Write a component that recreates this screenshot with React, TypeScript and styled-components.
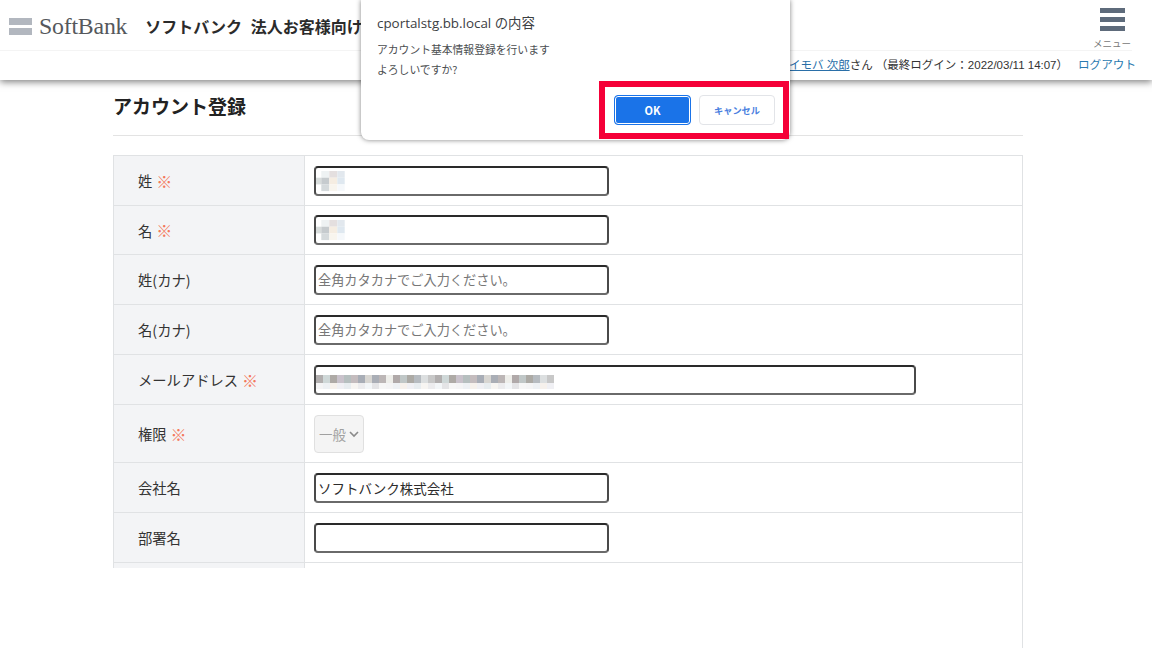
import React from 'react';
import styled, { createGlobalStyle } from 'styled-components';

const GlobalStyle = createGlobalStyle`
  html, body {
    margin: 0;
    padding: 0;
    background: #fff;
  }
  body {
    font-family: "Liberation Sans", "Noto Sans CJK JP", sans-serif;
    color: #333;
  }
`;

const Page = styled.div`
  position: relative;
  width: 1152px;
  height: 648px;
  overflow: hidden;
  background: #fff;
`;

// Header
const Header = styled.header`
  height: 80px;
  box-sizing: border-box;
  background: #fff;
  box-shadow: 0 2px 7px rgba(0, 0, 0, 0.5);
  display: flex;
  flex-direction: column;
`;

const TopRow = styled.div`
  height: 51px;
  box-sizing: border-box;
  border-bottom: 1px solid #f4f4f4;
  margin-right: 20px;
  padding: 2px 0 0 9px;
  display: flex;
  align-items: center;
`;

const LogoMark = styled.div`
  width: 23px;
  height: 17px;
  display: flex;
  flex-direction: column;
  justify-content: space-between;

  &::before, &::after {
    content: '';
    height: 7px;
    background: #b2b7bf;
  }
`;

const LogoText = styled.span`
  margin-left: 7px;
  font-family: "Liberation Serif", serif;
  font-size: 23.8px;
  letter-spacing: -0.2px;
  color: #55585c;
`;

const SiteTitle = styled.h1`
  margin: 0 0 0 18px;
  font-family: "Noto Sans CJK JP", sans-serif;
  font-size: 16px;
  font-weight: 700;
  word-spacing: 5px;
  color: #2b2b2b;
  white-space: nowrap;
`;

const MenuButton = styled.div`
  position: absolute;
  top: 8px;
  left: 1093px;
  width: 38px;
  display: flex;
  flex-direction: column;
  align-items: center;
`;

const MenuBar = styled.span`
  width: 25px;
  height: 5px;
  margin-bottom: 4px;
  background: #5e6b7b;
`;

const MenuLabel = styled.span`
  margin-top: 1px;
  font-family: "Noto Sans CJK JP", sans-serif;
  font-size: 9.5px;
  line-height: 14px;
  color: #777;
  white-space: nowrap;
`;

const UserRow = styled.div`
  height: 29px;
  box-sizing: border-box;
  padding: 0 16px 3px 0;
  display: flex;
  justify-content: flex-end;
  align-items: center;
  font-size: 11.5px;
  white-space: nowrap;
  color: #333;
`;

const UserLink = styled.a`
  color: #2a6fa8;
  text-decoration: underline;
`;

const LogoutLink = styled.a`
  margin-left: 10px;
  font-size: 11.6px;
  color: #2a7ab0;
`;

// Main form
const Main = styled.main`
  width: 910px;
  margin-left: 113px;
`;

const PageTitle = styled.h2`
  margin: 0 0 19px;
  height: 56px;
  box-sizing: border-box;
  padding-top: 12px;
  border-bottom: 1px solid #e3e3e3;
  font-family: "Noto Sans CJK JP", sans-serif;
  font-size: 19px;
  line-height: 27px;
  font-weight: 700;
  color: #222;
`;

const FormTable = styled.div`
  border-right: 1px solid #e0e2e4;
  height: 520px;
  box-sizing: border-box;
`;

// The row heights follow the reference, which was scaled down and lost a pixel at the second row
const Row = styled.div<{ $height?: number; $first?: boolean; $cut?: boolean }>`
  display: grid;
  grid-template-columns: 192px 1fr;
  height: ${(p) => p.$height ?? 50}px;
  box-sizing: border-box;
  border-top: ${(p) => (p.$first ? '1px solid #e0e2e4' : 'none')};
  border-bottom: ${(p) => (p.$cut ? 'none' : '1px solid #e0e2e4')};
`;

const Label = styled.div`
  background: #f3f4f6;
  border-left: 1px solid #e0e2e4;
  border-right: 1px solid #e0e2e4;
  padding-left: 24px;
  display: flex;
  align-items: center;
  gap: 4px;
  font-family: "Noto Sans CJK JP", sans-serif;
  font-size: 14.3px;
  color: #333;
`;

const Required = styled.span`
  color: #f4795c;
  font-size: 16px;
`;

const Cell = styled.div`
  padding-left: 9px;
  display: flex;
  align-items: center;
`;

const Field = styled.div<{ $wide?: boolean }>`
  position: relative;
  width: ${(p) => (p.$wide ? 602 : 295)}px;
  height: 30px;
  box-sizing: border-box;
  border: 2px solid #4a4a4a;
  border-top-color: #2a2a2a;
  border-bottom-color: #6a6a6a;
  border-radius: 4px;
  padding-left: 2px;
  display: flex;
  align-items: center;
  font-family: "Noto Sans CJK JP", sans-serif;
  font-size: 13.5px;
  color: #2c2c2c;
  background: #fff;
`;

const Placeholder = styled.span`
  font-size: 13.2px;
  color: #777;
`;

const FakeSelect = styled.div`
  width: 50px;
  height: 38px;
  box-sizing: border-box;
  border: 1px solid #e0e0e0;
  border-radius: 4px;
  background: #f4f4f4;
  padding-left: 4px;
  display: flex;
  align-items: center;
  gap: 3px;
  font-family: "Noto Sans CJK JP", sans-serif;
  font-size: 13.5px;
  color: #a0a0a0;
`;

const MosaicSvg = styled.svg`
  position: absolute;
  left: 0;
  top: 0;
`;

// Dialog
const Dialog = styled.div`
  position: absolute;
  top: 0;
  left: 361px;
  width: 429px;
  height: 140px;
  box-sizing: border-box;
  padding: 14px 16px 0;
  background: #fff;
  border-radius: 0 0 8px 8px;
  box-shadow: 0 0 5px rgba(0, 0, 0, 0.5);
`;

const DialogTitle = styled.div`
  font-family: "Open Sans", "Noto Sans CJK JP", sans-serif;
  font-size: 13.4px;
  line-height: 18px;
  color: #3c4043;
`;

const DialogMessage = styled.div`
  margin-top: 8px;
  font-family: "Noto Sans CJK JP", sans-serif;
  font-size: 10.8px;
  line-height: 19.5px;
  color: #4a4d50;
`;

const ButtonFrame = styled.div`
  position: absolute;
  left: 238px;
  top: 81px;
  width: 190px;
  height: 58px;
  box-sizing: border-box;
  border: 6px solid #f50038;
  padding-left: 9px;
  display: flex;
  align-items: center;
  gap: 8px;
`;

const DialogButton = styled.div<{ $primary?: boolean }>`
  width: ${(p) => (p.$primary ? 77 : 76)}px;
  height: 30px;
  box-sizing: border-box;
  border-radius: 4px;
  display: flex;
  align-items: center;
  justify-content: center;
  font-family: "Noto Sans CJK JP", sans-serif;
  font-size: ${(p) => (p.$primary ? 11 : 9.2)}px;
  font-weight: 700;
  color: ${(p) => (p.$primary ? '#fff' : '#4a7fe0')};
  background: ${(p) => (p.$primary ? '#1a73e8' : '#fff')};
  border: 1px solid ${(p) => (p.$primary ? '#1a73e8' : '#e2e4e8')};
  box-shadow: ${(p) => (p.$primary ? 'inset 0 0 0 1px #fff' : 'none')};
`;

// Blurred-out values, one cell per [x, y, width, colour]
const nameBlocks: [number, number, number, string][] = [
  [5.3, 3, 8, '#eef2f3'], [13.3, 3, 8, '#e4dfdf'], [21.3, 3, 7.4, '#e2e8ee'],
  [0, 9.7, 5.3, '#d8dddc'], [5.3, 9.7, 8, '#c6cbce'], [13.3, 9.7, 8, '#f5ede2'], [21.3, 9.7, 7.4, '#dfe8f0'],
  [5.3, 16.4, 8, '#d5dadc'], [13.3, 16.4, 8, '#f8f5ee'], [21.3, 16.4, 7.4, '#f5f8fb'],
];

const mailTop = ['#b2afaf', '#cfd8d8', '#aeaaa6', '#c9c2cb', '#b6bfbf', '#c4bcbe', '#a8adb6', '#d8d6d2', '#aaaeb6', '#bcb6b6', '#eeeeea', '#b0a9a9', '#c0c7c7', '#acaaa5', '#b6bbc0', '#dcdfe0', '#c8c8c8'];
const mailBottom = ['#f4f4f5', '#eef1f4', '#f6f1ec', '#f0f0f4', '#e8edf0', '#f7f5f2', '#ececee', '#f3f6f8', '#e4e4e6', '#f6f6f6'];

const NameMosaic = () => (
  <MosaicSvg width="30" height="26">
    {nameBlocks.map(([x, y, w, c], i) => (
      <rect key={i} x={x} y={y} width={w} height="6.7" fill={c} />
    ))}
  </MosaicSvg>
);

const MailMosaic = () => (
  <MosaicSvg width="240" height="26">
    {Array.from({ length: 34 }).map((_, i) => (
      <React.Fragment key={i}>
        <rect x={i * 7} y="8" width="7" height="8" fill={mailTop[i % mailTop.length]} />
        <rect x={i * 7} y="16" width="7" height="6" fill={mailBottom[i % mailBottom.length]} />
      </React.Fragment>
    ))}
  </MosaicSvg>
);

const Chevron = () => (
  <svg width="10" height="10" viewBox="0 0 10 10">
    <path d="M1 3 L5 7 L9 3" fill="none" stroke="#8a8a8a" strokeWidth="1.6" />
  </svg>
);

const App: React.FC = () => {
  return (
    <Page>
      <GlobalStyle />
      <Header>
        <TopRow>
          <LogoMark />
          <LogoText>SoftBank</LogoText>
          <SiteTitle>ソフトバンク 法人お客様向け</SiteTitle>
        </TopRow>
        <UserRow>
          <UserLink>イモバ 次郎</UserLink>さん （最終ログイン：2022/03/11 14:07）
          <LogoutLink>ログアウト</LogoutLink>
        </UserRow>
      </Header>

      <MenuButton>
        <MenuBar />
        <MenuBar />
        <MenuBar />
        <MenuLabel>メニュー</MenuLabel>
      </MenuButton>

      <Main>
        <PageTitle>アカウント登録</PageTitle>
        <FormTable>
          <Row $first $height={51}>
            <Label>姓 <Required>※</Required></Label>
            <Cell><Field><NameMosaic /></Field></Cell>
          </Row>
          <Row $height={49}>
            <Label>名 <Required>※</Required></Label>
            <Cell><Field><NameMosaic /></Field></Cell>
          </Row>
          <Row>
            <Label>姓(カナ)</Label>
            <Cell><Field><Placeholder>全角カタカナでご入力ください。</Placeholder></Field></Cell>
          </Row>
          <Row>
            <Label>名(カナ)</Label>
            <Cell><Field><Placeholder>全角カタカナでご入力ください。</Placeholder></Field></Cell>
          </Row>
          <Row>
            <Label>メールアドレス <Required>※</Required></Label>
            <Cell><Field $wide><MailMosaic /></Field></Cell>
          </Row>
          <Row $height={58}>
            <Label>権限 <Required>※</Required></Label>
            <Cell><FakeSelect>一般<Chevron /></FakeSelect></Cell>
          </Row>
          <Row>
            <Label>会社名</Label>
            <Cell><Field>ソフトバンク株式会社</Field></Cell>
          </Row>
          <Row>
            <Label>部署名</Label>
            <Cell><Field /></Cell>
          </Row>
          <Row $cut $height={5}>
            <Label />
            <Cell />
          </Row>
        </FormTable>
      </Main>

      <Dialog>
        <DialogTitle>cportalstg.bb.local の内容</DialogTitle>
        <DialogMessage>
          アカウント基本情報登録を行います
          <br />
          よろしいですか?
        </DialogMessage>
        <ButtonFrame>
          <DialogButton $primary>OK</DialogButton>
          <DialogButton>キャンセル</DialogButton>
        </ButtonFrame>
      </Dialog>
    </Page>
  );
};

export default App;
